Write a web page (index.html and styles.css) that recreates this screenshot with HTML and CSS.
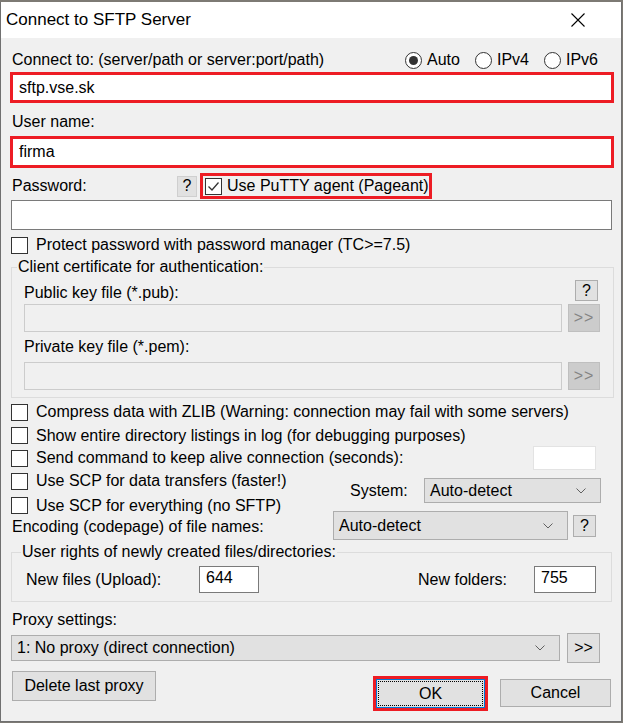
FILE: index.html
```html
<!DOCTYPE html>
<html lang="en">
<head>
    <meta charset="UTF-8">
    <title>Connect to SFTP Server</title>
    <link rel="stylesheet" href="styles.css">
</head>
<body>

<div class="window">
    <!-- Title bar -->
    <div class="titlebar">
        <span class="title">Connect to SFTP Server</span>
        <svg class="close" width="14" height="14" viewBox="0 0 14 14">
            <path d="M0.5 0.5 L13.5 13.5 M13.5 0.5 L0.5 13.5" stroke="#000" stroke-width="1.1" fill="none"/>
        </svg>
    </div>

    <div class="content">
        <div class="row-connect">
            <span>Connect to: (server/path or server:port/path)</span>
            <div class="radios">
                <label class="radio"><span class="dot checked"></span>Auto</label>
                <label class="radio"><span class="dot"></span>IPv4</label>
                <label class="radio"><span class="dot"></span>IPv6</label>
            </div>
        </div>
        <div class="marked wide server"><div class="field">sftp.vse.sk</div></div>

        <div class="label-row user-label">User name:</div>
        <div class="marked wide user"><div class="field">firma</div></div>

        <div class="row-password">
            <span class="pw-label">Password:</span>
            <span class="btn help small-help">?</span>
            <div class="marked agent">
                <span class="check on">
                    <svg width="15" height="15" viewBox="0 0 15 15"><polyline points="2.5,7.5 6,11 12.5,3.5" fill="none" stroke="#333" stroke-width="1.3"/></svg>
                </span>
                <span class="nowrap">Use PuTTY agent (Pageant)</span>
            </div>
        </div>
        <div class="edit password"></div>

        <div class="check-row protect">
            <span class="check"></span>
            <span>Protect password with password manager (TC&gt;=7.5)</span>
        </div>

        <!-- Certificate group -->
        <fieldset class="group cert">
            <legend>Client certificate for authentication:</legend>
            <div class="key-head">
                <span class="key-label">Public key file (*.pub):</span>
                <span class="btn help">?</span>
            </div>
            <div class="file-row">
                <div class="edit disabled"></div>
                <span class="btn disabled-btn">&gt;&gt;</span>
            </div>
            <div class="label-row private-label">Private key file (*.pem):</div>
            <div class="file-row private-row">
                <div class="edit disabled"></div>
                <span class="btn disabled-btn">&gt;&gt;</span>
            </div>
        </fieldset>

        <div class="check-row opt h24 first-opt">
            <span class="check"></span>
            <span>Compress data with ZLIB (Warning: connection may fail with some servers)</span>
        </div>
        <div class="check-row opt h23">
            <span class="check"></span>
            <span>Show entire directory listings in log (for debugging purposes)</span>
        </div>
        <div class="check-row opt h22">
            <span class="check"></span>
            <span>Send command to keep alive connection (seconds):</span>
            <div class="edit keepalive"></div>
        </div>

        <!-- SCP options with system and encoding selects -->
        <div class="scp">
            <div class="scp-left">
                <div class="check-row opt h24">
                    <span class="check"></span>
                    <span>Use SCP for data transfers (faster!)</span>
                </div>
                <div class="check-row opt h25">
                    <span class="check"></span>
                    <span>Use SCP for everything (no SFTP)</span>
                </div>
                <div class="enc-label">Encoding (codepage) of file names:</div>
            </div>
            <div class="scp-right">
                <div class="system-row">
                    <span class="system-label">System:</span>
                    <div class="select system">
                        <span>Auto-detect</span>
                        <svg width="10" height="6" viewBox="0 0 10 6"><polyline points="0.5,0.5 5,5 9.5,0.5" fill="none" stroke="#606060" stroke-width="1"/></svg>
                    </div>
                </div>
                <div class="enc-row">
                    <div class="select encoding">
                        <span>Auto-detect</span>
                        <svg width="10" height="6" viewBox="0 0 10 6"><polyline points="0.5,0.5 5,5 9.5,0.5" fill="none" stroke="#606060" stroke-width="1"/></svg>
                    </div>
                    <span class="btn help">?</span>
                </div>
            </div>
        </div>

        <!-- Rights group -->
        <fieldset class="group rights">
            <legend>User rights of newly created files/directories:</legend>
            <div class="rights-row">
                <span class="files-label">New files (Upload):</span>
                <div class="edit num">644</div>
                <span class="folders-label">New folders:</span>
                <div class="edit num folders">755</div>
            </div>
        </fieldset>

        <div class="label-row proxy-label">Proxy settings:</div>
        <div class="proxy-row">
            <div class="select proxy">
                <span>1: No proxy (direct connection)</span>
                <svg width="10" height="6" viewBox="0 0 10 6"><polyline points="0.5,0.5 5,5 9.5,0.5" fill="none" stroke="#606060" stroke-width="1"/></svg>
            </div>
            <span class="btn proxy-btn">&gt;&gt;</span>
        </div>

        <div class="buttons">
            <span class="btn delete">Delete last proxy</span>
            <div class="marked ok-mark"><span class="btn ok">OK</span></div>
            <span class="btn cancel">Cancel</span>
        </div>
    </div>
</div>

</body>
</html>
```

FILE: styles.css
```css
* {
    box-sizing: border-box;
}

body {
    margin: 0;
    background-color: #7d7a74;
    font-family: 'Liberation Sans', Arial, sans-serif;
    font-size: 16px;
    color: #000;
}

.window {
    width: 622px;
    height: 720px;
    margin-top: 2px;
    background-color: #f0f0f0;
    border: 1px solid #707070;
    border-top: none;
}

.titlebar {
    height: 36px;
    background-color: #fff;
    display: flex;
    align-items: center;
    justify-content: space-between;
    padding: 0 36px 0 5px;
}

.title {
    font-size: 17px;
}

.content {
    padding: 0 9px 0 10px;
}

.nowrap {
    white-space: nowrap;
}

/* Connect line with the IP radios */
.row-connect {
    margin-top: 11px;
    height: 22px;
    display: flex;
    align-items: center;
    padding-left: 1px;
}

.radios {
    margin-left: auto;
    display: flex;
    gap: 15px;
    padding-right: 14px;
}

.radio {
    display: flex;
    align-items: center;
    gap: 5px;
}

.dot {
    width: 17px;
    height: 17px;
    border: 1px solid #333;
    border-radius: 50%;
    background-color: #fff;
    display: flex;
    align-items: center;
    justify-content: center;
}

.dot.checked::after {
    content: '';
    width: 9px;
    height: 9px;
    border-radius: 50%;
    background-color: #333;
}

/* Red highlight frames */
.marked {
    border: 3px solid #ed1c24;
    background-color: #fff;
}

.wide {
    margin-left: -1px;
    margin-right: -2px;
}

.server {
    margin-top: 1px;
    height: 31px;
}

.user {
    margin-top: 4px;
    height: 32px;
}

.field {
    height: 100%;
    display: flex;
    align-items: center;
    padding-left: 6px;
}

.label-row {
    height: 20px;
    line-height: 20px;
    padding-left: 1px;
}

.user-label {
    margin-top: 9px;
}

/* Password line */
.row-password {
    margin-top: 5px;
    height: 26px;
    display: flex;
    align-items: center;
    padding-left: 1px;
}

.pw-label {
    width: 165px;
}

.btn {
    display: flex;
    align-items: center;
    justify-content: center;
    background-color: #e1e1e1;
    border: 1px solid #adadad;
}

.help {
    width: 23px;
    height: 22px;
}

.small-help {
    width: 20px;
    height: 21px;
    border-color: #cfcfcf;
    margin-right: 3px;
}

.agent {
    height: 26px;
    width: 232px;
    display: flex;
    align-items: center;
    background-color: transparent;
    padding-left: 2px;
    gap: 5px;
}

.check {
    width: 17px;
    height: 17px;
    border: 1px solid #333;
    background-color: #fff;
    display: flex;
    align-items: center;
    justify-content: center;
    flex-shrink: 0;
}

.edit {
    background-color: #fff;
    border: 1px solid #7a7a7a;
}

.password {
    margin-top: 1px;
    height: 30px;
}

.check-row {
    display: flex;
    align-items: center;
}

.protect {
    margin-top: 6px;
    height: 18px;
    gap: 8px;
}

/* Group boxes */
.group {
    border: 1px solid #dcdcdc;
    margin: 0;
    min-width: 0;
}

.group legend {
    height: 20px;
    line-height: 20px;
    padding: 0 1px;
}

.cert {
    margin: 3px -2px 0 0;
    padding: 0 13px 7px 12px;
}

.cert legend {
    margin-left: -7px;
}

.key-head {
    margin-top: 2px;
    height: 22px;
    display: flex;
    justify-content: space-between;
    align-items: flex-end;
}

.key-head .help {
    margin-right: 2px;
    height: 21px;
}

.key-label {
    line-height: 18px;
    margin-bottom: -1px;
}

.file-row {
    margin-top: 3px;
    height: 28px;
    display: flex;
    gap: 6px;
}

.file-row .edit {
    flex: 1;
}

.edit.disabled {
    background-color: #f0f0f0;
    border-color: #cccccc;
}

.disabled-btn {
    width: 32px;
    background-color: #cccccc;
    border-color: #bfbfbf;
    color: #838383;
    letter-spacing: 1px;
}

.private-label {
    margin-top: 6px;
    height: 18px;
    line-height: 18px;
    padding-left: 0;
}

.private-row {
    margin-top: 6px;
}

/* Option checkboxes */
.opt {
    gap: 8px;
}

.h24 { height: 24px; }
.h23 { height: 23px; }
.h22 { height: 22px; }
.h25 { height: 25px; }

.first-opt {
    margin-top: 2px;
}

.keepalive {
    margin-left: auto;
    margin-right: 16px;
    width: 63px;
    height: 24px;
    border-color: #e3e3e3;
}

.scp {
    display: flex;
}

.scp-left {
    width: 322px;
}

.enc-label {
    height: 18px;
    line-height: 18px;
    padding-left: 1px;
}

.scp-right {
    flex: 1;
}

.system-row {
    margin-top: 9px;
    height: 25px;
    display: flex;
    align-items: center;
    padding-left: 17px;
}

.system-label {
    width: 74px;
}

.select {
    display: flex;
    align-items: center;
    justify-content: space-between;
    background-color: #e1e1e1;
    border: 1px solid #adadad;
    padding: 0 14px 0 5px;
}

.system {
    width: 177px;
    height: 25px;
}

.enc-row {
    margin-top: 8px;
    height: 29px;
    display: flex;
    align-items: center;
    gap: 5px;
}

.encoding {
    width: 235px;
    height: 29px;
}

.rights {
    margin: 2px 0 0 0;
    padding: 0 15px 8px 14px;
}

.rights legend {
    margin-left: -5px;
}

.rights-row {
    margin-top: 4px;
    height: 27px;
    display: flex;
    align-items: center;
}

.files-label {
    width: 173px;
}

.num {
    width: 60px;
    height: 27px;
    padding: 2px 0 0 6px;
}

.folders-label {
    margin-left: auto;
    width: 116px;
}

.num.folders {
    width: 62px;
}

/* Proxy */
.proxy-label {
    margin-top: 8px;
}

.proxy-row {
    margin-top: 3px;
    height: 30px;
    display: flex;
    align-items: center;
    gap: 7px;
}

.proxy {
    width: 549px;
    height: 26px;
}

.proxy-btn {
    width: 33px;
    height: 30px;
}

/* Dialog buttons */
.buttons {
    display: flex;
    align-items: flex-start;
    padding-left: 1px;
}

.delete {
    margin-top: 8px;
    width: 144px;
    height: 30px;
}

.ok-mark {
    margin-top: 13px;
    margin-left: auto;
    width: 115px;
    height: 35px;
    background-color: transparent;
}

.ok {
    width: 100%;
    height: 100%;
    border: 1px solid #0078d7;
    outline: 1px dotted #000;
    outline-offset: -3px;
}

.cancel {
    margin-top: 16px;
    margin-left: 12px;
    margin-right: 1px;
    width: 111px;
    height: 28px;
}
```
